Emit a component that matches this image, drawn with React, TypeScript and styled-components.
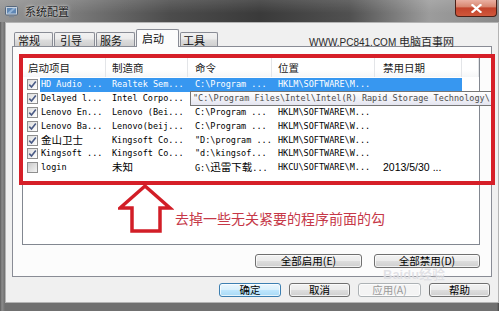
import React from "react";
import styled, { createGlobalStyle } from "styled-components";

const CJK = `"Noto Sans CJK SC", "Noto Sans", sans-serif`;
const MONO = `"DejaVu Sans Mono", "Liberation Mono", "Noto Sans CJK SC", monospace`;
const SANS = `"Liberation Sans", "Noto Sans CJK SC", sans-serif`;

const GlobalStyle = createGlobalStyle`
  html, body { margin: 0; padding: 0; background: #fff; }
  body { width: 499px; height: 311px; overflow: hidden; font-family: ${CJK}; }
  * { box-sizing: border-box; }
`;

const Window = styled.div`
  position: relative;
  width: 499px;
  height: 311px;
  display: flex;
  flex-direction: column;
  overflow: hidden;
  background: linear-gradient(180deg, #7a7a7a 0%, #6c6c6c 80%, #4e524e 100%);
`;

const TitleBar = styled.div`
  height: 22px;
  flex: none;
  display: flex;
  align-items: center;
  gap: 7px;
  padding-left: 5px;
  background:
    linear-gradient(180deg, rgba(255, 255, 255, 0.12) 0%, rgba(255, 255, 255, 0) 60%),
    linear-gradient(90deg, #959595 0%, #7c7c7c 14%, #4c4c4c 34%, #3a3a3a 52%, #505050 70%, #9c9c9c 86%, #8a8a8a 100%);
`;

const TitleText = styled.span`
  font-family: ${CJK};
  font-size: 11px;
  color: #1c1c1c;
  text-shadow: 0 0 4px rgba(255, 255, 255, 0.7), 0 0 2px rgba(255, 255, 255, 0.6);
`;

const CloseButton = styled.div`
  margin-left: auto;
  margin-right: 2px;
  align-self: flex-start;
  width: 42px;
  height: 17px;
  border: 1px solid #4a2018;
  border-top: none;
  border-radius: 0 0 4px 4px;
  background: linear-gradient(180deg, #eab0a2 0%, #d88670 42%, #c3432b 50%, #d0583c 100%);
  display: flex;
  align-items: center;
  justify-content: center;
`;

const Frame = styled.div`
  flex: 1;
  display: flex;
  padding: 0 2px 8px 5px;
  background: linear-gradient(90deg, #5c5c5c 0, #8c8c8c 2px, #707070 5px, #707070 calc(100% - 2px), #454545 100%);
`;

const Body = styled.div`
  flex: 1;
  display: flex;
  flex-direction: column;
  background: #f0f0f0;
  border: 1px solid #b4b4b4;
`;

const TabStrip = styled.div`
  height: 23px;
  flex: none;
  display: flex;
  align-items: flex-end;
  gap: 1px;
  padding-left: 8px;
`;

const Tab = styled.div<{ $active?: boolean; $w: number; $pl: number }>`
  position: relative;
  z-index: ${(p) => (p.$active ? 2 : 1)};
  width: ${(p) => p.$w}px;
  height: ${(p) => (p.$active ? 18 : 14)}px;
  margin-bottom: ${(p) => (p.$active ? -1 : 0)}px;
  padding-left: ${(p) => p.$pl}px;
  padding-bottom: ${(p) => (p.$active ? 2 : 0)}px;
  border: 1px solid #898c95;
  border-bottom: none;
  border-radius: 2px 2px 0 0;
  background: ${(p) =>
    p.$active ? "#fcfcfc" : "linear-gradient(180deg, #f2f2f2 0%, #ebebeb 48%, #dddddd 52%, #cfcfcf 100%)"};
  display: flex;
  align-items: center;
  font-family: ${CJK};
  font-size: 11px;
  color: #111;
`;

const TabPanel = styled.div`
  height: 231px;
  flex: none;
  margin: 0 6px;
  border: 1px solid #898c95;
  background: #fcfcfc;
  padding: 10px 11px 0 9px;
  display: flex;
  flex-direction: column;
`;

const ListView = styled.div`
  width: 458px;
  height: 188px;
  flex: none;
  border: 1px solid #828790;
  background: #fff;
  display: flex;
  flex-direction: column;
`;

const HeaderRow = styled.div`
  height: 19px;
  flex: none;
  display: flex;
  background: linear-gradient(180deg, #ffffff 0%, #ffffff 60%, #f5f6f7 100%);
`;

const HeaderCell = styled.div<{ $w?: number; $pl: number }>`
  ${(p) => (p.$w ? `width: ${p.$w}px; flex: none;` : "flex: 1;")}
  padding-left: ${(p) => p.$pl}px;
  border-right: 1px solid #e3e5e8;
  display: flex;
  align-items: center;
  font-family: ${CJK};
  font-size: 10.5px;
  color: #1a1a1a;
  white-space: nowrap;
`;

const Rows = styled.div`
  padding-top: 1px;
  display: flex;
  flex-direction: column;
`;

const Row = styled.div`
  height: 13.8px;
  flex: none;
  display: flex;
  align-items: stretch;
`;

const CheckCell = styled.div`
  width: 17px;
  flex: none;
  padding-left: 4px;
  display: flex;
  align-items: center;
`;

const Item = styled.div<{ $selected?: boolean }>`
  width: 422px;
  flex: none;
  display: flex;
  align-items: center;
  background: ${(p) => (p.$selected ? "#3797f0" : "transparent")};
  color: ${(p) => (p.$selected ? "#fff" : "#000")};
`;

const Cell = styled.span<{ $w: number; $pl: number; $sans?: boolean }>`
  width: ${(p) => p.$w}px;
  flex: none;
  padding-left: ${(p) => p.$pl}px;
  white-space: nowrap;
  overflow: hidden;
  font-family: ${(p) => (p.$sans ? SANS : MONO)};
  font-size: ${(p) => (p.$sans ? 10.5 : 8.5)}px;
  line-height: 13px;
`;

const Cjk = styled.span`
  font-family: ${CJK};
  font-size: 10.5px;
`;

const CheckBox = styled.div<{ $checked?: boolean }>`
  width: 11px;
  height: 11px;
  border: 1px solid #8f8f8f;
  background: ${(p) =>
    p.$checked ? "linear-gradient(135deg, #dcdcdc 0%, #ffffff 100%)" : "linear-gradient(135deg, #c9c9c9 0%, #f4f4f4 100%)"};
  display: flex;
  align-items: center;
  justify-content: center;
`;

const PanelButtons = styled.div`
  margin-top: 9px;
  display: flex;
  justify-content: flex-end;
  gap: 12px;
`;

const Footer = styled.div`
  margin-top: 6px;
  padding-right: 8px;
  display: flex;
  justify-content: flex-end;
  gap: 8px;
`;

const Button = styled.button<{ $w: number; $focus?: boolean }>`
  width: ${(p) => p.$w}px;
  height: 14px;
  padding: 0;
  margin: 0;
  border: 1px solid ${(p) => (p.$focus ? "#3c7fb1" : "#707070")};
  border-radius: 3px;
  background: ${(p) =>
    p.$focus
      ? "linear-gradient(180deg, #eaf6fd 0%, #d9f0fc 48%, #bee6fd 52%, #a7d9f5 100%)"
      : "linear-gradient(180deg, #f2f2f2 0%, #ebebeb 48%, #dddddd 52%, #cfcfcf 100%)"};
  box-shadow: inset 0 0 0 1px rgba(255, 255, 255, 0.7);
  font-family: ${CJK};
  font-size: 10.5px;
  line-height: 1;
  color: #000;
  display: flex;
  align-items: center;
  justify-content: center;
  &:disabled {
    color: #9a9a9a;
    border-color: #adb2b5;
    background: #f4f4f4;
  }
`;

/* overlays */
const Tooltip = styled.div`
  position: absolute;
  left: 190px;
  top: 91px;
  width: 302px;
  height: 15px;
  border: 1px solid #767676;
  background: linear-gradient(180deg, #ffffff 0%, #e4e5f0 100%);
  padding-left: 2px;
  font-family: ${MONO};
  font-size: 8.5px;
  line-height: 13px;
  color: #4c4c4c;
  white-space: nowrap;
  z-index: 5;
`;

const RedBox = styled.div`
  position: absolute;
  left: 19px;
  top: 54px;
  width: 476px;
  height: 131px;
  border: 4px solid #d61f28;
  z-index: 6;
  pointer-events: none;
`;

const ArrowMark = styled.svg`
  position: absolute;
  left: 118px;
  top: 183px;
  z-index: 6;
`;

const Note = styled.div`
  position: absolute;
  left: 175px;
  top: 208px;
  font-family: ${CJK};
  font-size: 14px;
  line-height: 20px;
  color: #c63848;
  white-space: nowrap;
  z-index: 6;
`;

const SiteMark = styled.div`
  position: absolute;
  left: 309px;
  top: 33px;
  font-family: ${SANS};
  font-size: 10px;
  line-height: 16px;
  color: #2a2a2a;
  white-space: nowrap;
  z-index: 6;
`;

const SiteMarkCjk = styled.span`
  font-family: ${CJK};
  font-size: 11px;
`;

const BaiduMark = styled.div`
  position: absolute;
  left: 383px;
  top: 268px;
  font-family: ${SANS};
  font-weight: bold;
  font-size: 13px;
  line-height: 13px;
  color: rgba(190, 192, 200, 0.45);
  text-shadow: 0 0 1px rgba(255, 255, 255, 0.8);
  white-space: nowrap;
  z-index: 7;
  pointer-events: none;
`;

const TABS = [
  { label: "常规", w: 39, pl: 3 },
  { label: "引导", w: 41, pl: 5 },
  { label: "服务", w: 39, pl: 3 },
  { label: "启动", w: 43, pl: 5, active: true },
  { label: "工具", w: 38, pl: 2 },
];

const HEADERS = [
  { label: "启动项目", w: 83, pl: 5 },
  { label: "制造商", w: 82, pl: 6 },
  { label: "命令", w: 84, pl: 7 },
  { label: "位置", w: 103, pl: 6 },
  { label: "禁用日期", w: 87, pl: 8 },
];

const COLS = [
  { w: 66, pl: 1 },
  { w: 82, pl: 6 },
  { w: 84, pl: 7 },
  { w: 103, pl: 6 },
  { w: 87, pl: 8 },
];

type RowData = { checked: boolean; selected?: boolean; cells: string[] };

const ROWS: RowData[] = [
  { checked: true, selected: true, cells: ["HD Audio ...", "Realtek Sem...", "C:\\Program ...", "HKLM\\SOFTWARE\\M...", ""] },
  { checked: true, cells: ["Delayed l...", "Intel Corpo...", "", "", ""] },
  { checked: true, cells: ["Lenovo En...", "Lenovo (Bei...", "C:\\Program ...", "HKLM\\SOFTWARE\\M...", ""] },
  { checked: true, cells: ["Lenovo Ba...", "Lenovo(beij...", "C:\\Program ...", "HKLM\\SOFTWARE\\W...", ""] },
  { checked: true, cells: ["金山卫士", "Kingsoft Co...", "\"D:\\program ...", "HKLM\\SOFTWARE\\W...", ""] },
  { checked: true, cells: ["Kingsoft ...", "Kingsoft Co...", "\"d:\\kingsof...", "HKLM\\SOFTWARE\\W...", ""] },
  { checked: false, cells: ["login", "未知", "G:\\迅雷下载...", "HKCU\\SOFTWARE\\M...", "2013/5/30 ..."] },
];

function renderMixed(text: string) {
  const parts = text.split(/([\u3400-\u9fff]+)/).filter((s) => s.length > 0);
  return parts.map((part, i) =>
    /[\u3400-\u9fff]/.test(part) ? <Cjk key={i}>{part}</Cjk> : <React.Fragment key={i}>{part}</React.Fragment>
  );
}

function Check({ checked }: { checked: boolean }) {
  return (
    <CheckBox $checked={checked}>
      {checked && (
        <svg width="9" height="9" viewBox="0 0 9 9">
          <path d="M1.3 4.6 L3.5 7 L7.8 1.4" fill="none" stroke="#4a5b86" strokeWidth="1.6" />
        </svg>
      )}
    </CheckBox>
  );
}

function AppIcon() {
  return (
    <svg width="13" height="13" viewBox="0 0 13 13">
      <rect x="0.5" y="1.5" width="12" height="8.5" rx="1" fill="#c9d3de" stroke="#56677c" />
      <rect x="2" y="3" width="9" height="5.5" fill="#5f86b3" />
      <path d="M2 8.5 L8 3 L11 3 L5 8.5 Z" fill="#a9c6e4" opacity="0.7" />
      <rect x="4" y="10.5" width="5" height="1.8" fill="#7c8796" />
    </svg>
  );
}

export default function App() {
  return (
    <>
      <GlobalStyle />
      <Window>
        <TitleBar>
          <AppIcon />
          <TitleText>系统配置</TitleText>
          <CloseButton>
            <svg width="11" height="9" viewBox="0 0 11 9">
              <path d="M1.5 1 L9.5 8 M9.5 1 L1.5 8" stroke="#fff" strokeWidth="2.2" strokeLinecap="square" />
            </svg>
          </CloseButton>
        </TitleBar>
        <Frame>
          <Body>
            <TabStrip>
              {TABS.map((t) => (
                <Tab key={t.label} $w={t.w} $pl={t.pl} $active={t.active}>
                  {t.label}
                </Tab>
              ))}
            </TabStrip>
            <TabPanel>
              <ListView>
                <HeaderRow>
                  {HEADERS.map((h) => (
                    <HeaderCell key={h.label} $w={h.w} $pl={h.pl}>
                      {h.label}
                    </HeaderCell>
                  ))}
                  <HeaderCell $pl={0} />
                </HeaderRow>
                <Rows>
                  {ROWS.map((r, ri) => (
                    <Row key={ri}>
                      <CheckCell>
                        <Check checked={r.checked} />
                      </CheckCell>
                      <Item $selected={r.selected}>
                        {r.cells.map((c, ci) => (
                          <Cell key={ci} $w={COLS[ci].w} $pl={COLS[ci].pl} $sans={ci === 4}>
                            {renderMixed(c)}
                          </Cell>
                        ))}
                      </Item>
                    </Row>
                  ))}
                </Rows>
              </ListView>
              <PanelButtons>
                <Button $w={107}>全部启用(E)</Button>
                <Button $w={106}>全部禁用(D)</Button>
              </PanelButtons>
            </TabPanel>
            <Footer>
              <Button $w={62} $focus>
                确定
              </Button>
              <Button $w={61}>取消</Button>
              <Button $w={63} disabled>
                应用(A)
              </Button>
              <Button $w={61}>帮助</Button>
            </Footer>
          </Body>
        </Frame>

        <SiteMark>
          WWW.PC841.COM <SiteMarkCjk>电脑百事网</SiteMarkCjk>
        </SiteMark>
        <Tooltip>"C:\Program Files\Intel\Intel(R) Rapid Storage Technology\</Tooltip>
        <RedBox />
        <ArrowMark width="56" height="52" viewBox="0 0 56 52">
          <polygon
            points="27,3 52,25 42,25 42,48 14,48 14,25 2,25"
            fill="none"
            stroke="#d21e27"
            strokeWidth="3.5"
            strokeLinejoin="miter"
          />
        </ArrowMark>
        <Note>去掉一些无关紧要的程序前面的勾</Note>
        <BaiduMark>Baidu经验</BaiduMark>
      </Window>
    </>
  );
}
